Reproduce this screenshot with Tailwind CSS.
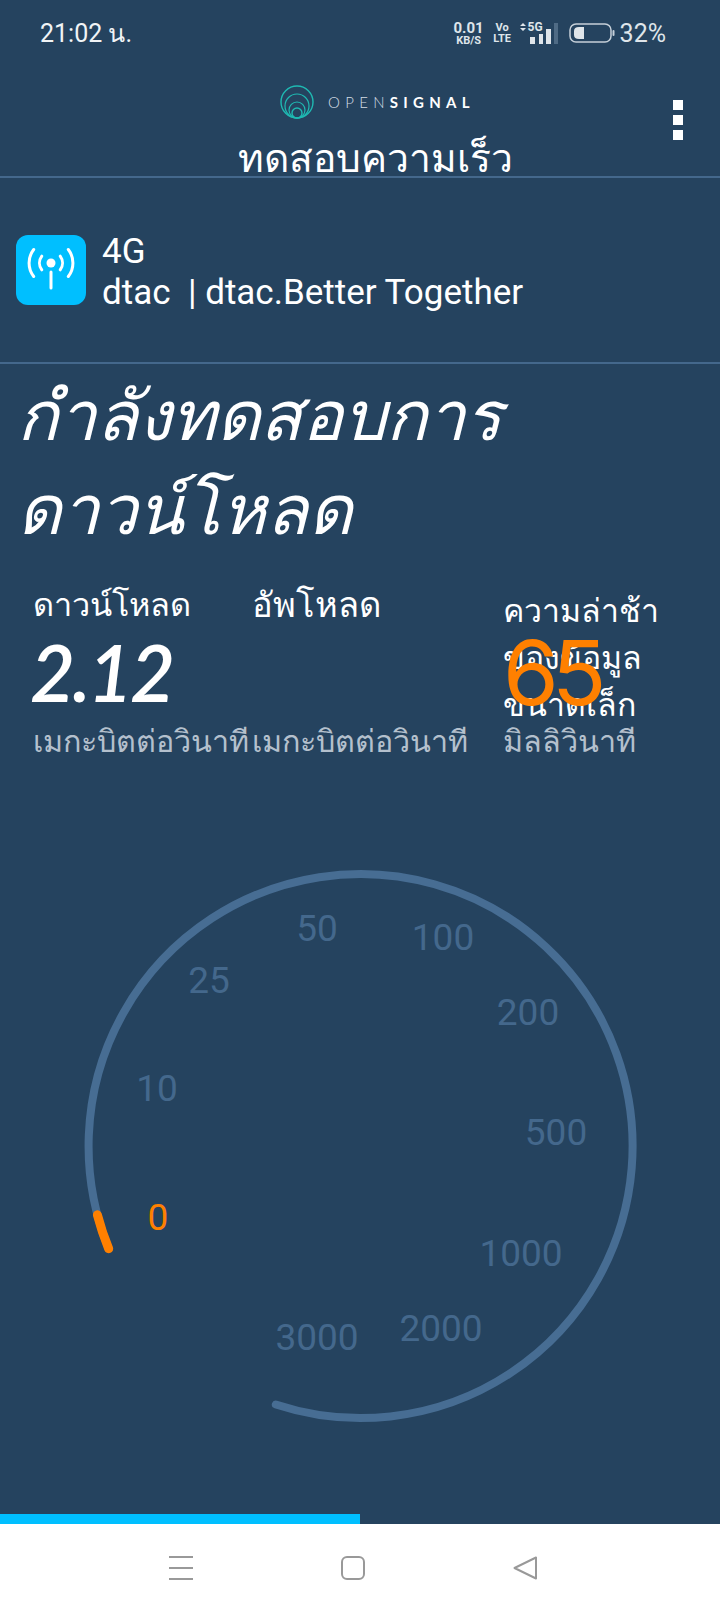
<!DOCTYPE html>
<html lang="th">
<head>
    <meta charset="UTF-8">
    <meta name="viewport" content="width=device-width, initial-scale=1.0">
    <title>Opensignal - Speed test</title>
    <script src="https://cdn.jsdelivr.net/npm/@tailwindcss/browser@4"></script>
</head>
<body class="font-['Roboto','Noto_Sans',sans-serif] text-white">
    <div class="flex flex-col w-[720px] h-[1612px] overflow-hidden bg-[#25435f]">
        <!-- status bar -->
        <div class="flex items-center justify-between h-[66px] pl-10 pr-[54px] shrink-0">
            <div class="text-[25px] leading-none text-[#f1f4f6]">21:02 น.</div>
            <div class="flex items-center text-[#dfe5ea]">
                <div class="flex flex-col items-center w-[30px] font-bold leading-none">
                    <span class="text-[15px]">0.01</span>
                    <span class="text-[11px] mt-[-1px]">KB/S</span>
                </div>
                <div class="flex flex-col items-center w-[15px] ml-[11px] font-bold leading-none text-[11px]">
                    <span>Vo</span>
                    <span>LTE</span>
                </div>
                <div class="relative w-[41px] h-[22px] ml-[9px]">
                    <span class="absolute left-[9px] top-[-1px] text-[12px] font-bold leading-none">5G</span>
                    <svg class="absolute inset-0" width="41" height="22" viewBox="0 0 41 22">
                        <path d="M1 4 L4 1 L7 4 Z M1 6 L4 9 L7 6 Z" fill="#dfe5ea" />
                        <rect x="11" y="15" width="5" height="7" fill="#dfe5ea" />
                        <rect x="20" y="12" width="4" height="10" fill="#dfe5ea" />
                        <rect x="27" y="7" width="5" height="15" fill="#dfe5ea" />
                        <rect x="35" y="1" width="4" height="21" fill="#4f6b85" />
                    </svg>
                </div>
                <svg class="ml-[9px]" width="46" height="20" viewBox="0 0 46 20">
                    <rect x="1" y="1" width="41" height="18" rx="6" fill="none" stroke="#c6d0d9" stroke-width="1.5" />
                    <path d="M10 4 H15 V16 H10 Q5 16 5 12 V8 Q5 4 10 4 Z" fill="#dfe5ea" />
                    <rect x="43.5" y="7" width="2" height="6" rx="1" fill="#c6d0d9" />
                </svg>
                <div class="ml-[5px] text-[25px] leading-none">32%</div>
            </div>
        </div>

        <!-- header -->
        <div class="relative h-[112px] border-b-2 border-[#44688c] shrink-0">
            <div class="flex items-center gap-[14px] pt-[19px] pl-[280px]">
                <svg width="34" height="34" viewBox="0 0 34 34" fill="none" stroke="#1fb9b2">
                    <circle cx="17" cy="17" r="16" stroke-width="1.4" />
                    <circle cx="17" cy="21" r="12" stroke-width="1.2" />
                    <circle cx="17" cy="25" r="8" stroke-width="1.2" />
                    <circle cx="17" cy="28" r="5" stroke-width="1.4" />
                </svg>
                <div class="text-[15px] leading-none tracking-[5.3px] font-['Lato',sans-serif] font-light text-[#d4dde5]">OPEN<span class="font-bold text-white">SIGNAL</span></div>
            </div>
            <div class="absolute left-0 right-0 bottom-[-7px] pl-[30px] text-center text-[39px] leading-[48px]">ทดสอบความเร็ว</div>
            <div class="absolute left-[673px] top-[34px] flex flex-col gap-[5px]">
                <div class="size-[10px] bg-white"></div>
                <div class="size-[10px] bg-white"></div>
                <div class="size-[10px] bg-white"></div>
            </div>
        </div>

        <!-- network -->
        <div class="flex items-center gap-[16px] h-[186px] pl-4 border-b-2 border-[#44688c] shrink-0">
            <div class="size-[70px] rounded-[12px] bg-[#00bfff]">
                <svg width="70" height="70" viewBox="0 0 70 70" fill="none" stroke="white" stroke-width="3" stroke-linecap="round">
                    <circle cx="35" cy="28" r="4.5" fill="white" stroke="none" />
                    <path d="M35 37 V53" />
                    <path d="M44.2 21.1 A11.5 11.5 0 0 1 44.2 34.9 M25.8 21.1 A11.5 11.5 0 0 0 25.8 34.9" />
                    <path d="M52.3 14.5 A22 22 0 0 1 52.3 41.5 M17.7 14.5 A22 22 0 0 0 17.7 41.5" />
                </svg>
            </div>
            <div class="text-[35px] leading-[41px] mt-[4px]">
                <div>4G</div>
                <div class="whitespace-pre">dtac  | dtac.Better Together</div>
            </div>
        </div>

        <!-- phase title -->
        <div class="pl-[17px] pt-[6px] pb-[28px] text-[68.5px] leading-[94px] italic font-medium">
            <div>กำลังทดสอบการ</div>
            <div>ดาวน์โหลด</div>
        </div>

        <!-- results -->
        <div class="grid grid-cols-[219px_252px_1fr] pl-[33px] h-[214px] shrink-0">
            <div class="relative">
                <div class="text-[32.5px] leading-[47px] mt-[-4px]">ดาวน์โหลด</div>
                <div class="font-['Lato',sans-serif] italic font-semibold text-[78px] leading-none mt-[4px] ml-[-3px] tracking-[-3px]">2.12</div>
                <div class="absolute top-[136px] left-0 text-[30.5px] leading-[40px] whitespace-nowrap text-[#b4c0cd]">เมกะบิตต่อวินาที</div>
            </div>
            <div class="relative">
                <div class="text-[34.5px] leading-[47px] mt-[-4px]">อัพโหลด</div>
                <div class="absolute top-[136px] left-0 text-[30.5px] leading-[40px] whitespace-nowrap text-[#b4c0cd]">เมกะบิตต่อวินาที</div>
            </div>
            <div class="relative ml-[-1px]">
                <div class="text-[32px] leading-[47px] mt-[2px]">ความล่าช้า<br>ของข้อมูล<br>ขนาดเล็ก</div>
                <div class="absolute top-[42px] left-0 font-['Inter',sans-serif] font-normal text-[90px] leading-none tracking-[-7px] text-[#ff8000]">65</div>
                <div class="absolute top-[136px] left-0 text-[30.5px] leading-[40px] whitespace-nowrap text-[#b4c0cd]">มิลลิวินาที</div>
            </div>
        </div>

        <!-- gauge -->
        <div class="flex-1 min-h-0">
            <svg width="720" height="714" viewBox="0 800 720 714" class="block text-[37px]" text-anchor="middle" dominant-baseline="central">
                <path d="M108.7 1248.7 A272 272 0 1 1 275.8 1404.5" fill="none" stroke="#476d93" stroke-width="8" stroke-linecap="round" />
                <path d="M97.4 1214.8 A272 272 0 0 0 108.7 1248.7" fill="none" stroke="#ff8000" stroke-width="9" stroke-linecap="round" />
                <g fill="#44688c">
                    <text x="317" y="928">50</text>
                    <text x="443" y="937">100</text>
                    <text x="209" y="980">25</text>
                    <text x="528" y="1012">200</text>
                    <text x="157" y="1088">10</text>
                    <text x="556" y="1132">500</text>
                    <text x="521" y="1253">1000</text>
                    <text x="441" y="1328">2000</text>
                    <text x="317" y="1337">3000</text>
                </g>
                <text x="158" y="1217" fill="#ff8000">0</text>
            </svg>
        </div>

        <!-- progress -->
        <div class="h-[10px] shrink-0">
            <div class="h-full w-1/2 bg-[#00bfff]"></div>
        </div>

        <!-- nav bar -->
        <div class="flex items-center justify-center gap-[148px] h-[88px] bg-white shrink-0 pr-[14px]">
            <svg width="24" height="24" viewBox="0 0 24 24" stroke="#999" stroke-width="2"><path d="M0 1 H24 M0 12 H24 M0 23 H24" /></svg>
            <svg width="24" height="24" viewBox="0 0 24 24" fill="none" stroke="#999" stroke-width="2"><rect x="1" y="1" width="22" height="22" rx="5" /></svg>
            <svg width="24" height="24" viewBox="0 0 24 24" fill="none" stroke="#999" stroke-width="2" stroke-linejoin="round"><path d="M23 1.5 V22.5 L1.5 12 Z" /></svg>
        </div>
    </div>
</body>
</html>
